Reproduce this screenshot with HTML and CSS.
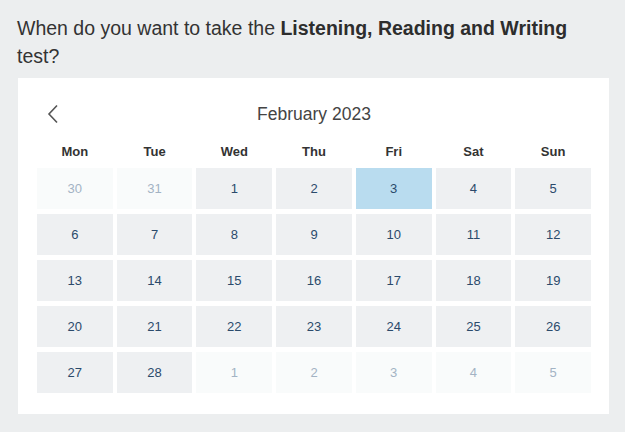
FILE: index.html
```html
<!DOCTYPE html>
<html lang="en">
<head>
    <meta charset="UTF-8">
    <meta name="viewport" content="width=device-width, initial-scale=1.0">
    <title>Choose test date</title>
    <link rel="stylesheet" href="styles.css">
</head>
<body>

<div class="page">
    <p class="question">When do you want to take the <b>Listening, Reading and Writing</b> test?</p>

    <div class="calendar">
        <div class="cal-nav">
            <button class="prev" type="button" aria-label="Previous month">
                <svg width="12" height="20" viewBox="0 0 12 20"><path d="M10 1.5 L2 10 L10 18.5" fill="none" stroke="#555" stroke-width="1.6"/></svg>
            </button>
            <div class="month">February 2023</div>
            <div></div>
        </div>

        <div class="weekdays">
            <div>Mon</div><div>Tue</div><div>Wed</div><div>Thu</div><div>Fri</div><div>Sat</div><div>Sun</div>
        </div>

        <div class="days">
            <div class="day other">30</div>
            <div class="day other">31</div>
            <div class="day">1</div>
            <div class="day">2</div>
            <div class="day selected">3</div>
            <div class="day">4</div>
            <div class="day">5</div>

            <div class="day">6</div>
            <div class="day">7</div>
            <div class="day">8</div>
            <div class="day">9</div>
            <div class="day">10</div>
            <div class="day">11</div>
            <div class="day">12</div>

            <div class="day">13</div>
            <div class="day">14</div>
            <div class="day">15</div>
            <div class="day">16</div>
            <div class="day">17</div>
            <div class="day">18</div>
            <div class="day">19</div>

            <div class="day">20</div>
            <div class="day">21</div>
            <div class="day">22</div>
            <div class="day">23</div>
            <div class="day">24</div>
            <div class="day">25</div>
            <div class="day">26</div>

            <div class="day">27</div>
            <div class="day">28</div>
            <div class="day other">1</div>
            <div class="day other">2</div>
            <div class="day other">3</div>
            <div class="day other">4</div>
            <div class="day other">5</div>
        </div>
    </div>
</div>

</body>
</html>
```

FILE: styles.css
```css
body {
    margin: 0;
    background-color: #eceeef;
    font-family: "Liberation Sans", Arial, sans-serif;
}
.page {
    padding: 14px 16px 18px 18px;
}
.question {
    margin: 0 0 8px -1px;
    max-width: 580px;
    font-size: 19.5px;
    line-height: 28px;
    color: #333;
}
.question b {
    color: #2d2d2d;
}
.calendar {
    background: white;
    padding: 20px 18px 21px 19px;
}
.cal-nav {
    display: grid;
    grid-template-columns: 1fr auto 1fr;
    align-items: center;
    height: 32px;
}
.prev {
    justify-self: start;
    margin-left: 10px;
    padding: 0;
    border: none;
    background: none;
    display: flex;
    cursor: pointer;
}
.month {
    font-size: 17.5px;
    color: #444;
}
.weekdays, .days {
    display: grid;
    grid-template-columns: repeat(7, 1fr);
    column-gap: 4px;
}
.weekdays {
    margin-top: 10px;
    height: 22px;
    align-items: center;
}
.weekdays div {
    text-align: center;
    font-size: 13px;
    font-weight: bold;
    color: #333;
}
.days {
    margin-top: 6px;
    row-gap: 5px;
}
.day {
    height: 41px;
    display: flex;
    align-items: center;
    justify-content: center;
    background: #eef0f2;
    font-size: 13px;
    color: #2b4a6b;
}
.day.other {
    background: #f9fbfb;
    color: #a3b3c4;
}
.day.selected {
    background: #b9dcef;
    color: #2b4a6b;
}
```
